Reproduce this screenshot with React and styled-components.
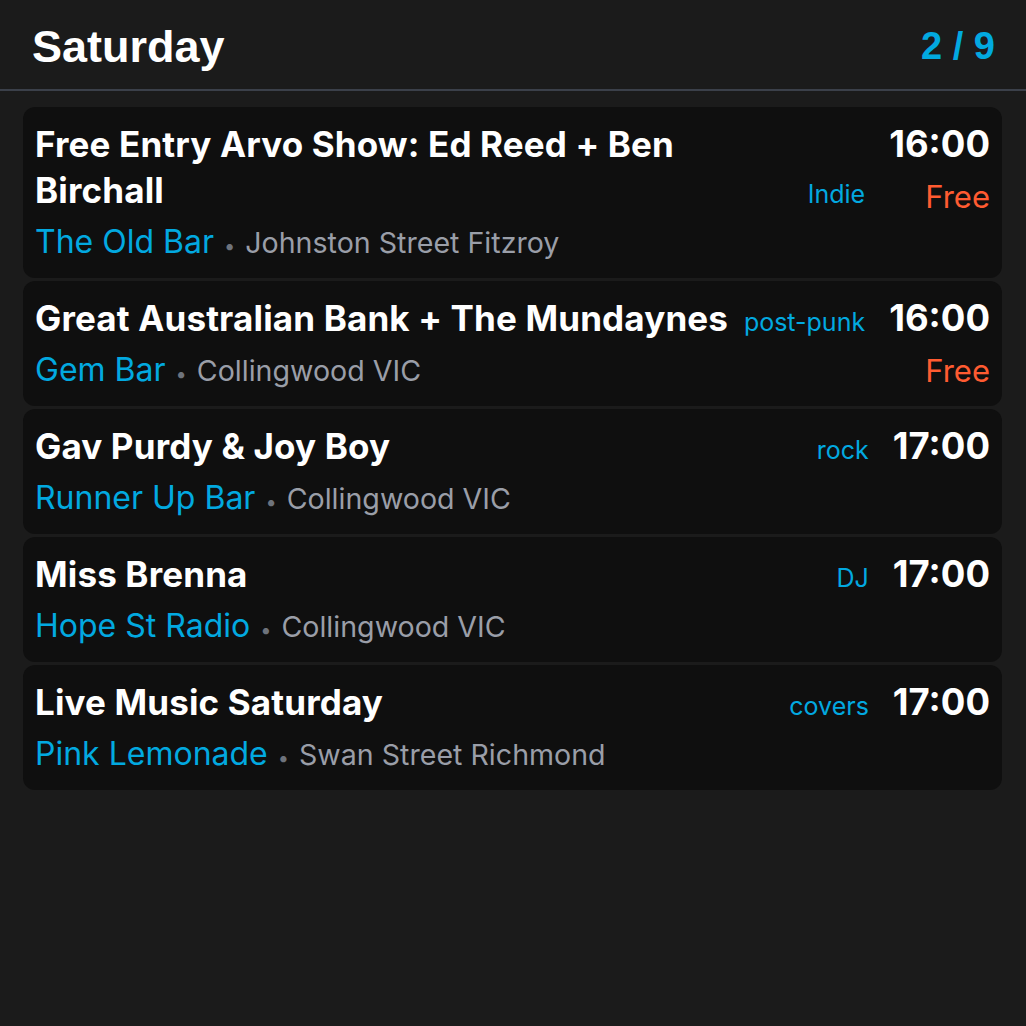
import React from 'react'
import styled, { createGlobalStyle } from 'styled-components'

const events = [
  { title: 'Free Entry Arvo Show: Ed Reed + Ben Birchall', genre: 'Indie', venue: 'The Old Bar', place: 'Johnston Street Fitzroy', time: '16:00', price: 'Free' },
  { title: 'Great Australian Bank + The Mundaynes', genre: 'post-punk', venue: 'Gem Bar', place: 'Collingwood VIC', time: '16:00', price: 'Free' },
  { title: 'Gav Purdy & Joy Boy', genre: 'rock', venue: 'Runner Up Bar', place: 'Collingwood VIC', time: '17:00' },
  { title: 'Miss Brenna', genre: 'DJ', venue: 'Hope St Radio', place: 'Collingwood VIC', time: '17:00' },
  { title: 'Live Music Saturday', genre: 'covers', venue: 'Pink Lemonade', place: 'Swan Street Richmond', time: '17:00' },
]

function App() {
  return (
    <Screen>
      <GlobalStyle />
      <Header>
        <DayTitle>Saturday</DayTitle>
        <PageCount>2 / 9</PageCount>
      </Header>
      <List>
        {events.map((e, i) => (
          <Card key={i}>
            <Main>
              <TitleRow>
                <Title>{e.title}</Title>
                <Genre>{e.genre}</Genre>
              </TitleRow>
              <VenueRow>
                <Venue>{e.venue}</Venue>
                <Dot>•</Dot>
                <Place>{e.place}</Place>
              </VenueRow>
            </Main>
            <Side>
              <Time>{e.time}</Time>
              {e.price && <Price>{e.price}</Price>}
            </Side>
          </Card>
        ))}
      </List>
    </Screen>
  )
}

export default App

const GlobalStyle = createGlobalStyle`
  html, body {
    margin: 0;
    padding: 0;
    background: #1b1b1b;
  }
  body {
    font-family: Inter, "Noto Sans", sans-serif;
  }
`
const Screen = styled.div`
  width: 1026px;
  height: 1026px;
  background: #1b1b1b;
  color: #fff;
`
const Header = styled.div`
  display: flex;
  justify-content: space-between;
  align-items: center;
  height: 91px;
  padding: 4px 31px 0 32px;
  box-sizing: border-box;
  border-bottom: 2px solid #3b404a;
`
const DayTitle = styled.h1`
  margin: 0;
  font-family: "Liberation Sans", Arial, sans-serif;
  font-weight: 700;
  font-size: 45px;
  color: #fff;
`
const PageCount = styled.div`
  font-family: "Liberation Sans", Arial, sans-serif;
  font-weight: 700;
  font-size: 38px;
  color: #02a9e0;
`
const List = styled.div`
  display: flex;
  flex-direction: column;
  gap: 3px;
  padding: 16px 24px 0 23px;
`
const Card = styled.div`
  display: flex;
  gap: 24px;
  background: #0f0f0f;
  border-radius: 12px;
  padding: 14px 12px 12px 12px;
`
const Main = styled.div`
  flex: 1;
  min-width: 0;
`
const TitleRow = styled.div`
  display: flex;
  align-items: last baseline;
  gap: 10px;
`
const Title = styled.div`
  flex: 1;
  min-width: 0;
  font-size: 35px;
  font-weight: 700;
  line-height: 46px;
  letter-spacing: 0.15px;
  color: #fff;
`
const Genre = styled.div`
  font-size: 25px;
  color: #02a9e0;
  white-space: nowrap;
`
const VenueRow = styled.div`
  display: flex;
  align-items: baseline;
  margin-top: 9px;
  line-height: 40px;
`
const Venue = styled.span`
  font-size: 32px;
  color: #02a9e0;
`
const Dot = styled.span`
  font-size: 20px;
  color: #6e737c;
  margin: 0 10px;
`
const Place = styled.span`
  font-size: 28.6px;
  color: #9a9ea8;
`
const Side = styled.div`
  display: flex;
  flex-direction: column;
  align-items: flex-end;
`
const Time = styled.div`
  font-size: 36.5px;
  font-weight: 700;
  line-height: 46px;
  color: #fff;
`
const Price = styled.div`
  margin-top: 7px;
  font-size: 31px;
  line-height: 46px;
  color: #ff5b31;
`
